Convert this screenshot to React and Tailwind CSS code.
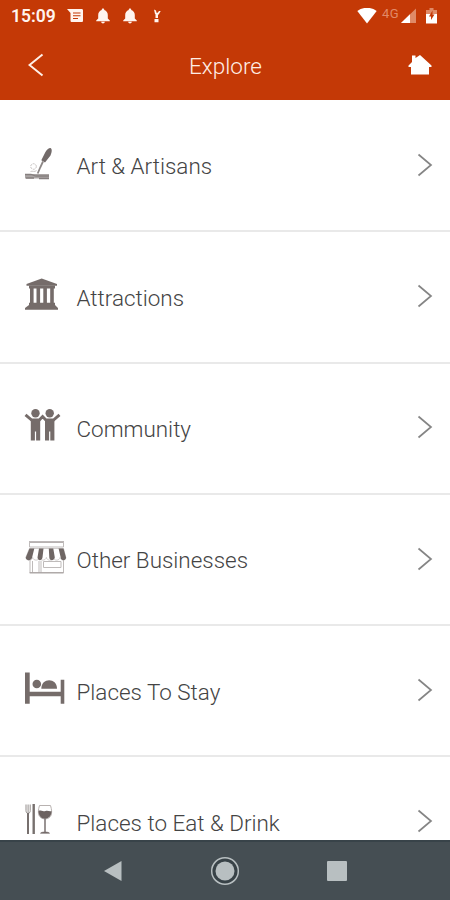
const ArtIcon = () => (
    <svg className="w-[50px] h-[50px]" viewBox="0 0 50 50" fill="none">
        <path d="M30.500 8c2 1 1.300 4.500 0 7.500l-5.500 7-3.700-2.200 4-8c1.200-2.300 3.200-4.800 5.200-4.300z" fill="#726a69" />
        <path d="M23 21.500l-2.800 6-2.500 6" stroke="#8d8786" strokeWidth="1.800" />
        <circle cx="13.500" cy="26.500" r="2.800" stroke="#c4c0bf" strokeDasharray="2 1" />
        <path d="M10.500 31.500c2-1 4 1 6-1" stroke="#cfcbca" />
        <path d="M5 34h24v4.500H5z" fill="#aaa5a4" />
        <path d="M5 34.500h6l5 1.500h13M6 38h8M19 38.500h10" stroke="#86807f" strokeWidth="1.300" />
    </svg>
)

const MuseumIcon = () => (
    <svg className="w-[50px] h-[50px]" viewBox="0 0 50 50" fill="#756c6a">
        <path d="M21.700 7.500L37 13v1.800H6.500V13z" />
        <path d="M9 14.500h26v3H9z" />
        <path d="M10 17h3.600v15H10zM16.500 17h3.600v15h-3.600zM23.300 17h3.600v15h-3.600zM30.200 17h3.600v15h-3.600z" />
        <path d="M9 31.700h26v2.300l3 3v1.800H5V37l4-3z" />
    </svg>
)

const PeopleIcon = () => (
    <svg className="w-[50px] h-[50px]" viewBox="0 0 50 50" fill="#756c6a">
        <circle cx="15.500" cy="11.300" r="4.200" />
        <circle cx="29.700" cy="11.300" r="4.200" />
        <path d="M5.500 12.800l6.200 5.200h7.600l3.300-3.500 3.300 3.500h7.600l6-5.200" fill="none" stroke="#756c6a" strokeWidth="2.900" />
        <path d="M10.800 17h9.400v21.500h-4.100v-9h-1.200v9h-4.100zM25 17h9.400v21.500h-4.100v-9h-1.200v9H25z" />
    </svg>
)

const ShopIcon = () => (
    <svg className="w-[50px] h-[50px]" viewBox="0 0 50 50" fill="none">
        <path d="M9.500 8.500h34v4.500h-34zM10 26v12.800h33.500V26M12.500 27v11.500M19 27v11.500M23.500 27.500H41v6H23.500zM21 27v11.500" stroke="#bfbbba" />
        <path d="M9 7.800h35M9.500 38.800h34" stroke="#a19b9a" />
        <path d="M9.500 14.500h34l2.300 9c0 3.500-5 3.500-5.700 0-.8 3.500-6.300 3.500-6.800 0-.8 3.500-6.300 3.500-6.900 0-.8 3.500-6.300 3.500-6.800 0-.8 3.500-6.300 3.500-6.900 0-.8 3.500-6.500 3.500-6.900 0z" fill="#fff" stroke="#c4c0bf" strokeWidth="0.800" />
        <path d="M9.500 14.500h4.800l-2.200 9c-.8 3.800-6.300 3.500-6.300 0zM19 14.500h4.500l-1 9c-.8 3.500-4.500 3.500-5 0zM28.800 14.500h4.500l1.500 9c-.8 3.500-5.200 3.500-5.500 0zM38.600 14.500h4.900l2.500 9c0 3.500-5 3.500-5.300 0z" fill="#6f6664" />
    </svg>
)

const BedIcon = () => (
    <svg className="w-[50px] h-[50px]" viewBox="0 0 50 50" fill="#756c6a">
        <path d="M5 7.500h4.700v19.300h31V14.700h3.600v24h-3.600v-7.500h-31v7.500H5z" />
        <circle cx="16.800" cy="19" r="4.300" />
        <path d="M21.300 23.700c0-11.200 15.700-11.200 15.700 0z" />
    </svg>
)

const DiningIcon = () => (
    <svg className="w-[50px] h-[50px]" viewBox="0 0 50 50" fill="none">
        <path d="M6 8.500v6c0 4 4.200 4 4.200 0v-6M8.100 8.500V18" stroke="#88817f" strokeWidth="0.900" />
        <path d="M8 17v21" stroke="#77706e" strokeWidth="2" />
        <path d="M13.700 8v30" stroke="#77706e" strokeWidth="2.400" />
        <path d="M19.500 9.500c-2.500 8-1 13 5.500 13.500 6.500-.5 8-5.500 5.500-13.500z" stroke="#b8b2b0" />
        <path d="M18.500 15c2-1.300 4 1.200 7 0 2.500-.8 4 .8 6 0 .2 4.500-2.500 7.500-6.500 7.700-4 0-6.500-3.200-6.500-7.700z" fill="#6c6260" />
        <path d="M25 22v14" stroke="#817978" strokeWidth="1.600" />
        <path d="M20.500 37.200c1-1.500 8-1.500 9 0z" fill="#756c6a" stroke="#756c6a" strokeWidth="0.700" />
    </svg>
)

const Bell = () => (
    <svg className="w-[14px] h-4" viewBox="0 0 14 16" fill="#fff4ee">
        <path d="M7 .5c1 0 1.300.7 1.300 1.500 2.200.7 3.500 2.700 3.500 5v3.500l2 2v.8H.2v-.8l2-2V7c0-2.300 1.300-4.300 3.500-5C5.700 1.200 6 .5 7 .5zM5.200 13.700h3.600c0 2.300-3.600 2.300-3.600 0z" />
    </svg>
)

const items = [
    { label: "Art & Artisans", icon: ArtIcon },
    { label: "Attractions", icon: MuseumIcon },
    { label: "Community", icon: PeopleIcon },
    { label: "Other Businesses", icon: ShopIcon },
    { label: "Places To Stay", icon: BedIcon },
    { label: "Places to Eat & Drink", icon: DiningIcon },
]

const StatusBar = () => (
    <div className="h-8 flex items-center justify-between pl-[11px] pr-[13px] text-[#fff4ee]">
        <div className="flex items-center">
            <span className="w-[56px] pt-[2px] text-[17.500px] font-semibold leading-none">15:09</span>
            <svg className="w-[17px] h-[14px]" viewBox="0 0 17 14">
                <path d="M0 0h14.500c1 0 1.500.5 1.500 1.500v10c0 1-.5 1.500-1.500 1.500H5c-1 0-1.500-.5-1.500-1.500V4z" fill="#fff4ee" />
                <path d="M6 4h7.500M6 6.700h7.500M6 9.500h5" stroke="#c43906" strokeWidth="1.100" />
            </svg>
            <span className="ml-[12px] flex gap-[13px]">
                <Bell />
                <Bell />
            </span>
            <svg className="w-2 h-[14px] ml-[16px]" viewBox="0 0 8 14" fill="#fff4ee">
                <path d="M1 .5l2 1 .5 2.300h1.200L6 2h1.700L6 5 4.500 6.500 2 5zM2.500 5H5v4H2.500zM1.500 10h4v3.300h-4z" />
            </svg>
        </div>
        <div className="flex items-center">
            <svg className="w-5 h-4" viewBox="0 0 20 16">
                <path d="M.3 3C6-1.300 14-1.300 19.700 3L10 15.500z" fill="#fff" />
            </svg>
            <span className="ml-[5px] w-[19px] -mt-[6px] text-[13px] leading-none tracking-[0.500px] text-[#e18a68]">4G</span>
            <svg className="w-4 h-4 -mt-px" viewBox="0 0 16 16">
                <path d="M0 15L15 .5V15z" fill="#df8a67" />
                <path d="M0 15L9 6.300V15z" fill="#fff" />
            </svg>
            <svg className="w-[11px] h-4 ml-[9px]" viewBox="0 0 11 16">
                <path d="M3.500 0h4v2H11v4H0V2h3.500z" fill="#df8a67" />
                <path d="M0 6h11v9.500H0z" fill="#fff" />
                <path d="M6.500 2.500L3 8.500h2V12l3.500-5.500h-2z" fill="#c43906" />
            </svg>
        </div>
    </div>
)

const App = () => {
    return (
        <div className="w-[450px] h-[900px] flex flex-col overflow-hidden bg-white font-['Roboto',sans-serif]">
            <header className="h-[100px] shrink-0 bg-[#c43906]">
                <StatusBar />
                <div className="h-[68px] grid grid-cols-3 items-center pl-[28px] pr-[18px]">
                    <svg className="w-4 h-6 -mt-[2px]" viewBox="0 0 16 24" fill="none">
                        <path d="M14.500 1.500L1.500 12l13 10.500" stroke="#fff0e8" strokeWidth="2" />
                    </svg>
                    <h1 className="-ml-[9px] text-center text-[22.500px] font-light leading-none text-[#ffeee6]">Explore</h1>
                    <svg className="w-6 h-5 -mt-[2px] justify-self-end" viewBox="0 0 24 20">
                        <path d="M4 .5h3.500V3L12 0l11.500 10.500v1.500H21v7.500H3V12H.5v-1.500L4 7z" fill="#fff" />
                    </svg>
                </div>
            </header>

            <main className="flex-1 min-h-0 overflow-hidden pt-px">
                {items.map(({ label, icon: Icon }) => (
                    <div key={label} className="h-[131.300px] flex items-center pl-[20px] pr-[17px] pb-[2px] border-b-2 border-[#e9e9e9]">
                        <Icon />
                        <span className="ml-[6.500px] flex-1 pt-[5px] text-[22.450px] font-light text-[#444444]">{label}</span>
                        <svg className="w-4 h-6" viewBox="0 0 16 24" fill="none">
                            <path d="M1.500 1.500L14 12 1.500 22.500" stroke="#858585" strokeWidth="1.700" />
                        </svg>
                    </div>
                ))}
            </main>

            <nav className="h-[60px] shrink-0 flex justify-center items-center gap-[87px] bg-[#454e53] border-t-2 border-[#384349]">
                <svg className="w-[20px] h-[22px]" viewBox="0 0 20 22">
                    <path d="M1 11L18.500 1v20z" fill="#b8bfc1" />
                </svg>
                <svg className="w-[30px] h-[30px]" viewBox="0 0 30 30">
                    <circle cx="15" cy="15" r="13.300" fill="#384247" stroke="#b8bfc1" strokeWidth="1.500" />
                    <circle cx="15" cy="15" r="9.500" fill="#b8bfc1" />
                </svg>
                <div className="w-[20px] h-[20px] rounded-[1px] bg-[#b8bfc1]" />
            </nav>
        </div>
    )
}

export default App
